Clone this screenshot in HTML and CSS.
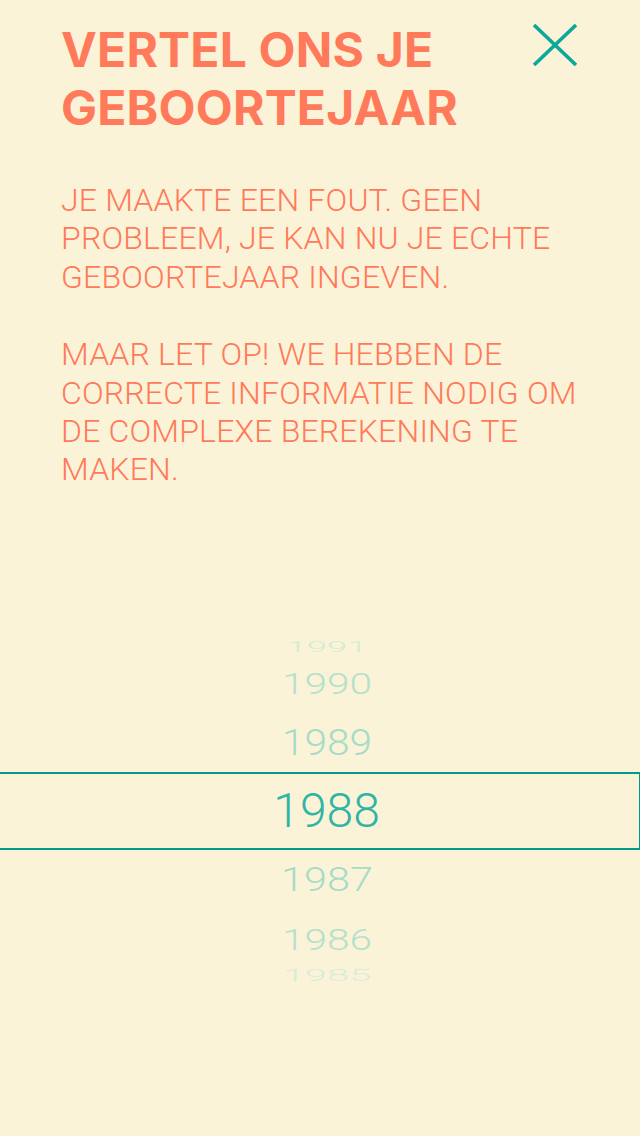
FILE: index.html
```html
<!DOCTYPE html>
<html lang="nl">
<head>
<meta charset="utf-8">
<title>Geboortejaar</title>
<link rel="stylesheet" href="styles.css">
</head>
<body>
<main class="screen">
  <section class="intro">
    <header class="header">
      <h1 class="title">VERTEL ONS JE GEBOORTEJAAR</h1>
      <button class="close" aria-label="Sluiten">
        <svg width="44" height="42" viewBox="0 0 44 42" aria-hidden="true">
          <line x1="1" y1="1" x2="43" y2="41" />
          <line x1="43" y1="1" x2="1" y2="41" />
        </svg>
      </button>
    </header>
    <p class="text">JE MAAKTE EEN FOUT. GEEN PROBLEEM, JE KAN NU JE ECHTE GEBOORTEJAAR INGEVEN.</p>
    <p class="text text-second">MAAR LET OP! WE HEBBEN DE CORRECTE INFORMATIE NODIG OM DE COMPLEXE BEREKENING TE MAKEN.</p>
  </section>
  <section class="picker">
    <div class="row row-1991"><span class="yr yr-far">1991</span></div>
    <div class="row row-1990"><span class="yr yr-mid">1990</span></div>
    <div class="row row-1989"><span class="yr yr-near">1989</span></div>
    <div class="row row-selected"><span class="yr yr-sel">1988</span></div>
    <div class="row row-1987"><span class="yr yr-near2">1987</span></div>
    <div class="row row-1986"><span class="yr yr-mid2">1986</span></div>
    <div class="row row-1985"><span class="yr yr-far2">1985</span></div>
  </section>
</main>
</body>
</html>
```
FILE: styles.css
```css
html, body {
  margin: 0;
  padding: 0;
  background: #fbf3d8;
}
.screen {
  width: 640px;
  height: 1136px;
  overflow: hidden;
  background: #fbf3d8;
  font-family: Roboto, "Liberation Sans", sans-serif;
}
.intro {
  padding: 21px 61px 0 61px;
}
.header {
  display: flex;
  align-items: flex-start;
  justify-content: space-between;
}
.title {
  margin: 0;
  font-family: Inter, Roboto, sans-serif;
  font-size: 48px;
  line-height: 58px;
  font-weight: 700;
  letter-spacing: 0.2px;
  color: #ff7a5a;
  max-width: 460px;
}
.close {
  margin: 3px 2px 0 0;
  padding: 0;
  border: 0;
  background: none;
  width: 44px;
  height: 42px;
  display: block;
}
.close svg {
  display: block;
  stroke: #0ca899;
  stroke-width: 3.6;
}
.text {
  margin: 44px 0 0 0;
  font-size: 32px;
  line-height: 38.4px;
  font-weight: 300;
  letter-spacing: 0.18px;
  color: #ff7a5a;
}
.text-second {
  margin-top: 39px;
}
.picker {
  margin-top: 141px;
  display: flex;
  flex-direction: column;
}
.row {
  display: flex;
  justify-content: center;
  align-items: center;
  padding-left: 14px;
  font-weight: 300;
}
.yr {
  display: inline-block;
  line-height: 40px;
  transform-origin: 50% 50%;
}
.row-1991 { height: 34px; }
.row-1990 { height: 40px; }
.row-1989 { height: 60px; padding-top: 8px; }
.row-selected {
  height: 74px;
  border-top: 2px solid #00998a;
  border-bottom: 2px solid #00998a;
  border-right: 1px solid #00998a;
}
.row-1987 { height: 60px; }
.row-1986 { height: 60px; }
.row-1985 { height: 12px; }

.yr-sel {
  font-size: 48px;
  color: #2fb5a4;
}
.yr-near {
  font-size: 40.6px;
  color: #a6dcc7;
  transform: scaleY(0.93);
}
.yr-near2 {
  font-size: 41.4px;
  color: #a6dcc7;
  transform: scaleY(0.82);
}
.yr-mid, .yr-mid2 {
  font-size: 40.6px;
  color: #b4e1cc;
  transform: scaleY(0.73);
}
.yr-far {
  font-size: 36.5px;
  color: #d4ebd6;
  transform: scaleY(0.42);
}
.yr-far2 {
  font-size: 40px;
  color: #d8ecd8;
  transform: scaleY(0.39);
}
```
